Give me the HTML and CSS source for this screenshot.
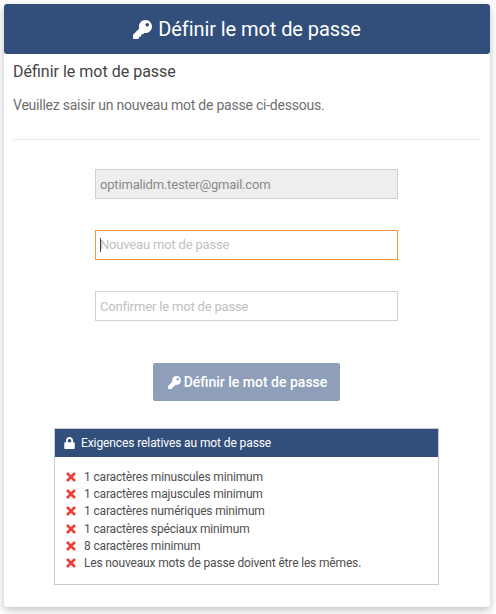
FILE: index.html
```html
<!DOCTYPE html>
<html lang="fr">
<head>
  <meta charset="UTF-8" />
  <title>Définir le mot de passe</title>
  <link rel="stylesheet" href="styles.css">
</head>
<body>
  <main class="card">
    <header class="card-header">
      <svg class="icon-key-lg" viewBox="0 0 512 512"><path fill="currentColor" d="M512 176c0 97-79 176-176 176-11 0-22-1-33-3l-24 27c-5 5-11 8-18 8h-37v40c0 13-11 24-24 24h-40v40c0 13-11 24-24 24H24c-13 0-24-11-24-24v-78c0-6 3-12 7-17l162-162c-6-18-9-37-9-55C160 79 239 0 336 0s176 79 176 176zm-176-48c0 26 22 48 48 48s48-22 48-48-22-48-48-48-48 22-48 48z"/></svg>
      <span>Définir le mot de passe</span>
    </header>
    <div class="card-body">
      <h4>Définir le mot de passe</h4>
      <p class="intro">Veuillez saisir un nouveau mot de passe ci-dessous.</p>
      <hr />
      <form class="form">
        <input class="field" type="text" value="optimalidm.tester@gmail.com" disabled />
        <div class="field field-focus"><i class="caret"></i>Nouveau mot de passe</div>
        <input class="field" type="password" placeholder="Confirmer le mot de passe" />
        <button class="btn" type="button">
          <svg class="icon-key" viewBox="0 0 512 512"><path fill="currentColor" d="M512 176c0 97-79 176-176 176-11 0-22-1-33-3l-24 27c-5 5-11 8-18 8h-37v40c0 13-11 24-24 24h-40v40c0 13-11 24-24 24H24c-13 0-24-11-24-24v-78c0-6 3-12 7-17l162-162c-6-18-9-37-9-55C160 79 239 0 336 0s176 79 176 176zm-176-48c0 26 22 48 48 48s48-22 48-48-22-48-48-48-48 22-48 48z"/></svg>
          Définir le mot de passe
        </button>
      </form>
      <section class="rules">
        <div class="rules-title">
          <svg class="icon-lock" viewBox="0 0 448 512"><path fill="currentColor" d="M400 224h-24v-72C376 68 308 0 224 0S72 68 72 152v72H48c-26 0-48 22-48 48v192c0 26 22 48 48 48h352c26 0 48-22 48-48V272c0-26-22-48-48-48zm-104 0H152v-72c0-40 32-72 72-72s72 32 72 72v72z"/></svg>
          Exigences relatives au mot de passe
        </div>
        <ul class="rules-list">
          <li><svg class="icon-x" viewBox="0 0 12 12"><path d="M2 2l8 8M10 2l-8 8"/></svg>1 caractères minuscules minimum</li>
          <li><svg class="icon-x" viewBox="0 0 12 12"><path d="M2 2l8 8M10 2l-8 8"/></svg>1 caractères majuscules minimum</li>
          <li><svg class="icon-x" viewBox="0 0 12 12"><path d="M2 2l8 8M10 2l-8 8"/></svg>1 caractères numériques minimum</li>
          <li><svg class="icon-x" viewBox="0 0 12 12"><path d="M2 2l8 8M10 2l-8 8"/></svg>1 caractères spéciaux minimum</li>
          <li><svg class="icon-x" viewBox="0 0 12 12"><path d="M2 2l8 8M10 2l-8 8"/></svg>8 caractères minimum</li>
          <li><svg class="icon-x" viewBox="0 0 12 12"><path d="M2 2l8 8M10 2l-8 8"/></svg>Les nouveaux mots de passe doivent être les mêmes.</li>
        </ul>
      </section>
    </div>
  </main>
</body>
</html>
```

FILE: styles.css
```css
html, body {
  margin: 0;
  padding: 0;
}
body {
  background: #fff;
  font-family: Roboto, sans-serif;
  color: #3e3e3e;
  height: 614px;
  overflow: hidden;
}
.card {
  width: 486px;
  height: 603px;
  margin: 4px 0 0 4px;
  background: #fff;
  border-radius: 3px;
  box-shadow: 0 3px 8px rgba(0, 0, 0, 0.25);
}
.card-header {
  height: 50px;
  display: flex;
  align-items: center;
  justify-content: center;
  gap: 6px;
  background: #324f7c;
  color: #fff;
  font-size: 20px;
  letter-spacing: -0.08px;
  border-radius: 3px;
}
.icon-key-lg {
  width: 19px;
  height: 19px;
}
.card-body {
  padding: 0 9px;
}
h4 {
  margin: 0;
  padding-top: 8px;
  font-size: 16px;
  font-weight: 400;
  line-height: 20px;
  color: #444;
}
.intro {
  margin: 14px 0 0;
  font-size: 14px;
  line-height: 18px;
  letter-spacing: -0.23px;
  color: #6f6f6f;
}
hr {
  margin: 25px 0 0;
  border: 0;
  border-top: 1px solid #e8e8e8;
}
.form {
  display: flex;
  flex-direction: column;
  align-items: center;
  padding-top: 29px;
  padding-right: 1px;
}
.field {
  box-sizing: border-box;
  width: 303px;
  height: 30px;
  margin-bottom: 31px;
  padding: 0 4px;
  border: 1px solid #d2d2d2;
  background: #fff;
  font-family: Roboto, sans-serif;
  font-size: 13px;
  line-height: 28px;
  letter-spacing: -0.18px;
  color: #c0c0c0;
  outline: none;
}
.field::placeholder {
  color: #c0c0c0;
  opacity: 1;
}
.field:disabled {
  background: #eee;
  color: #8a8a8a;
}
.field-focus {
  position: relative;
  border-color: #f0973f;
}
.caret {
  position: absolute;
  left: 4px;
  top: 7px;
  width: 1px;
  height: 14px;
  background: #444;
}
.btn {
  width: 187px;
  height: 38px;
  margin-top: 11px;
  padding: 0 0 0 2px;
  display: flex;
  align-items: center;
  justify-content: center;
  gap: 3px;
  border: 0;
  border-radius: 2px;
  background: #8f9fb9;
  color: #fff;
  font-family: Roboto, sans-serif;
  font-size: 14px;
  font-weight: 500;
}
.icon-key {
  width: 13px;
  height: 13px;
}
.rules {
  width: 383px;
  margin: 27px 0 0 41px;
  border: 1px solid #c9c9c9;
}
.rules-title {
  height: 28px;
  display: flex;
  align-items: center;
  padding-left: 9px;
  background: #324f7c;
  color: #fff;
  font-size: 12px;
  letter-spacing: -0.1px;
}
.icon-lock {
  width: 11px;
  height: 12px;
  margin-right: 6px;
}
.rules-list {
  list-style: none;
  margin: 0;
  padding: 11px 0 12px 10px;
  font-size: 12px;
  letter-spacing: -0.16px;
  color: #4f4f4f;
}
.rules-list li {
  display: flex;
  align-items: center;
  height: 17.3px;
}
.icon-x {
  width: 12px;
  height: 12px;
  margin-right: 7px;
  fill: none;
  stroke: #ee3f36;
  stroke-width: 2.6;
}
```
